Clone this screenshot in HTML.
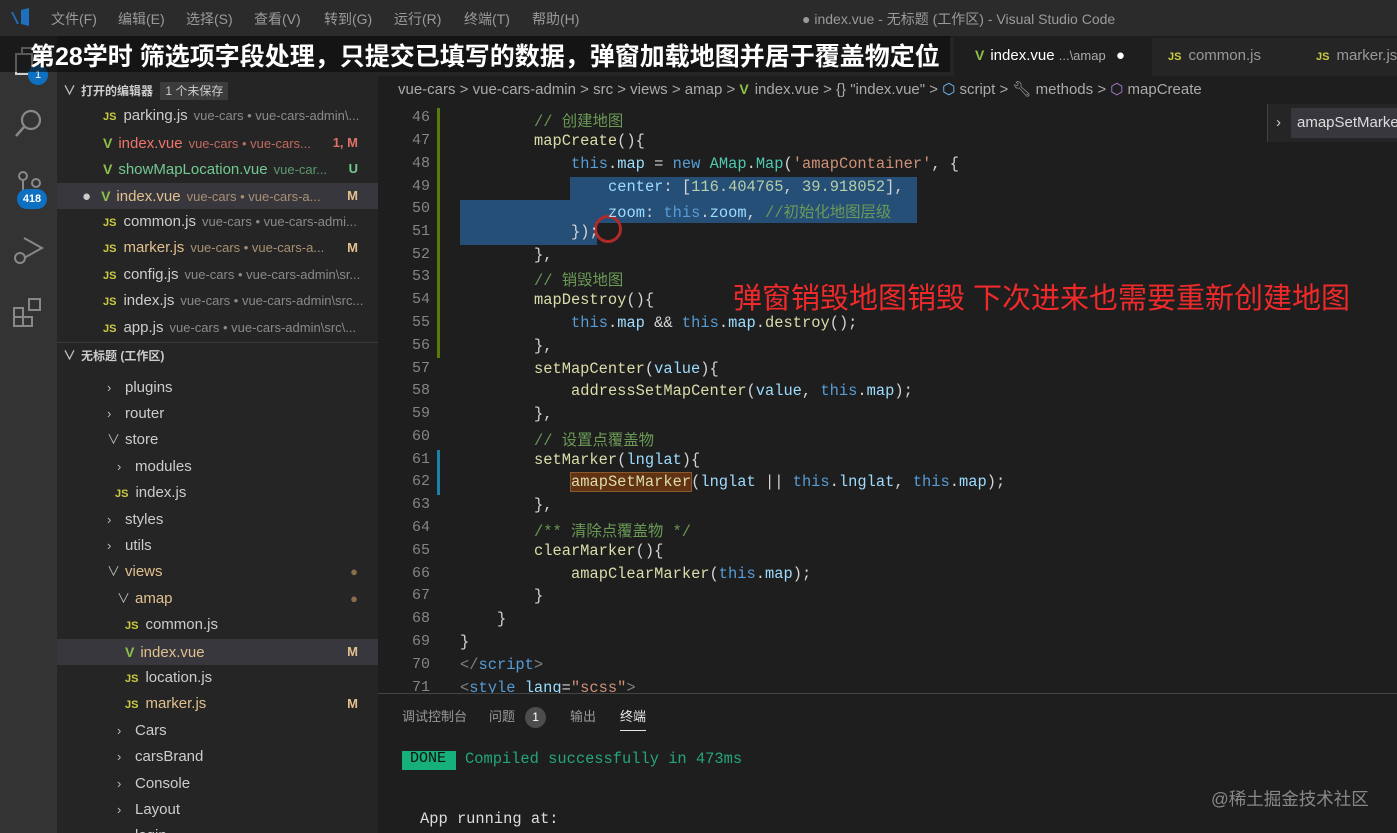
<!DOCTYPE html>
<html><head><meta charset="utf-8"><style>
*{margin:0;padding:0;box-sizing:border-box}
html{width:1397px;height:833px;overflow:hidden}
body{width:1397px;height:833px;overflow:hidden;background:#1e1e1e;font-family:"Liberation Sans","Noto Sans CJK SC",sans-serif;color:#ccc;position:relative}
.abs{position:absolute}
#title{left:0;top:0;width:1397px;height:36px;background:#2b2b2b}
#title span{position:absolute;top:9px;font-size:14px;color:#9a9a9a}
#act{left:0;top:36px;width:57px;height:797px;background:#333}
#side{left:57px;top:36px;width:321px;height:797px;background:#252526}
.row{position:absolute;left:57px;width:321px;height:26px;font-size:15px;line-height:26px;white-space:nowrap;overflow:hidden;color:#ccc}
.row .d{font-size:13px;color:#8a8a8a;margin-left:6px}
.js{color:#cbcb41;font-weight:bold;font-size:11px;margin-right:7px}
.vue{color:#8dc149;font-weight:bold;font-size:14px;margin-right:6px}
.st{position:absolute;right:20px;font-size:13px;font-weight:bold}
.chev{color:#bbb;display:inline-block;width:12px;margin-right:6px;font-size:13px}
.ln{position:absolute;left:378px;width:52px;text-align:right;font-family:"Liberation Mono",monospace;font-size:15px;color:#858585}
.cl{position:absolute;left:460px;font-family:"Liberation Mono","Noto Sans CJK SC",monospace;font-size:15.4px;white-space:pre;color:#d4d4d4}
.c{color:#6a9955}.k{color:#569cd6}.f{color:#dcdcaa}.s{color:#ce9178}.v{color:#9cdcfe}.n{color:#b5cea8}.t{color:#4ec9b0}
</style></head><body>
<div id="title" class="abs">
<svg class="abs" style="left:9px;top:8px" width="22" height="20"><path d="M2 4 L8 16 L10 16 L4 4Z M12 2 L20 0 L20 18 L12 16Z" fill="#1f6fbf"/></svg>
<span style="left:51px">文件(F)</span><span style="left:118px">编辑(E)</span><span style="left:186px">选择(S)</span><span style="left:254px">查看(V)</span><span style="left:324px">转到(G)</span><span style="left:394px">运行(R)</span><span style="left:464px">终端(T)</span><span style="left:532px">帮助(H)</span>
<span style="left:802px">● index.vue - 无标题 (工作区) - Visual Studio Code</span>
</div>
<div id="act" class="abs"></div>
<svg class="abs" style="left:14px;top:46px" width="30" height="30"><rect x="2" y="8" width="16" height="20" fill="none" stroke="#d0d0d0" stroke-width="2"/><path d="M8 8V2h10l6 6v14h-6" fill="none" stroke="#d0d0d0" stroke-width="2"/></svg>
<div class="abs" style="left:28px;top:65px;width:20px;height:20px;border-radius:50%;background:#0e70c0;color:#fff;font-size:11px;text-align:center;line-height:20px">1</div>
<svg class="abs" style="left:14px;top:108px" width="30" height="32"><circle cx="17" cy="12" r="9" fill="none" stroke="#888" stroke-width="2.2"/><path d="M10 19L2 28" stroke="#888" stroke-width="2.5"/></svg>
<svg class="abs" style="left:14px;top:170px" width="30" height="30"><circle cx="9" cy="6" r="4" fill="none" stroke="#888" stroke-width="2"/><circle cx="22" cy="13" r="4" fill="none" stroke="#888" stroke-width="2"/><path d="M9 10V26" stroke="#888" stroke-width="2"/></svg>
<div class="abs" style="left:17px;top:189px;width:30px;height:20px;border-radius:10px;background:#0e70c0;color:#fff;font-size:11px;font-weight:bold;text-align:center;line-height:20px">418</div>
<svg class="abs" style="left:12px;top:234px" width="32" height="34"><path d="M12 4 L30 14 L12 24" fill="none" stroke="#888" stroke-width="2"/><circle cx="8" cy="24" r="5" fill="none" stroke="#888" stroke-width="2"/></svg>
<svg class="abs" style="left:12px;top:296px" width="32" height="34"><rect x="2" y="12" width="9" height="9" fill="none" stroke="#888" stroke-width="2"/><rect x="11" y="21" width="9" height="9" fill="none" stroke="#888" stroke-width="2"/><rect x="2" y="21" width="9" height="9" fill="none" stroke="#888" stroke-width="2"/><rect x="17" y="3" width="11" height="11" fill="none" stroke="#888" stroke-width="2"/></svg>
<div id="side" class="abs"></div>
<div class="row" style="top:78px;font-size:12px;font-weight:bold;padding-left:6px"><span class="chev">∨</span>打开的编辑器 <span style="background:#3c3c3c;padding:2px 5px;font-weight:normal;margin-left:4px">1 个未保存</span></div>
<div class="row" style="top:103px;padding-left:46px"><span class="js">JS</span>parking.js<span class="d">vue-cars • vue-cars-admin\...</span></div>
<div class="row" style="top:130px;padding-left:46px;color:#f0746b"><span class="vue">V</span>index.vue<span class="d" style="color:#c06a60">vue-cars • vue-cars...</span><span class="st" style="color:#e0706a">1, M</span></div>
<div class="row" style="top:156px;padding-left:46px;color:#73c991"><span class="vue">V</span>showMapLocation.vue<span class="d" style="color:#5a9a70">vue-car...</span><span class="st">U</span></div>
<div class="row" style="top:183px;padding-left:25px;background:#37373d;color:#e2c08d"><span style="color:#ccc;margin-right:10px">●</span><span class="vue">V</span>index.vue<span class="d" style="color:#a89070">vue-cars • vue-cars-a...</span><span class="st">M</span></div>
<div class="row" style="top:209px;padding-left:46px"><span class="js">JS</span>common.js<span class="d">vue-cars • vue-cars-admi...</span></div>
<div class="row" style="top:235px;padding-left:46px;color:#e2c08d"><span class="js">JS</span>marker.js<span class="d" style="color:#a89070">vue-cars • vue-cars-a...</span><span class="st">M</span></div>
<div class="row" style="top:262px;padding-left:46px"><span class="js">JS</span>config.js<span class="d">vue-cars • vue-cars-admin\sr...</span></div>
<div class="row" style="top:288px;padding-left:46px"><span class="js">JS</span>index.js<span class="d">vue-cars • vue-cars-admin\src...</span></div>
<div class="row" style="top:315px;padding-left:46px"><span class="js">JS</span>app.js<span class="d">vue-cars • vue-cars-admin\src\...</span></div>
<div class="row" style="top:342px;font-size:12px;font-weight:bold;padding-left:6px;border-top:1px solid #3a3a3a"><span class="chev">∨</span>无标题 (工作区)</div>
<div class="row" style="top:375px;padding-left:50px"><span class="chev">›</span>plugins</div>
<div class="row" style="top:401px;padding-left:50px"><span class="chev">›</span>router</div>
<div class="row" style="top:427px;padding-left:50px"><span class="chev">∨</span>store</div>
<div class="row" style="top:454px;padding-left:60px"><span class="chev">›</span>modules</div>
<div class="row" style="top:480px;padding-left:58px"><span class="js">JS</span>index.js</div>
<div class="row" style="top:507px;padding-left:50px"><span class="chev">›</span>styles</div>
<div class="row" style="top:533px;padding-left:50px"><span class="chev">›</span>utils</div>
<div class="row" style="top:559px;padding-left:50px;color:#e2c08d"><span class="chev">∨</span>views<span class="st" style="color:#8a6d4a">●</span></div>
<div class="row" style="top:586px;padding-left:60px;color:#e2c08d"><span class="chev">∨</span>amap<span class="st" style="color:#8a6d4a">●</span></div>
<div class="row" style="top:612px;padding-left:68px"><span class="js">JS</span>common.js</div>
<div class="row" style="top:639px;padding-left:68px;background:#37373d;color:#e2c08d"><span class="vue">V</span>index.vue<span class="st">M</span></div>
<div class="row" style="top:665px;padding-left:68px"><span class="js">JS</span>location.js</div>
<div class="row" style="top:691px;padding-left:68px;color:#e2c08d"><span class="js">JS</span>marker.js<span class="st">M</span></div>
<div class="row" style="top:718px;padding-left:60px"><span class="chev">›</span>Cars</div>
<div class="row" style="top:744px;padding-left:60px"><span class="chev">›</span>carsBrand</div>
<div class="row" style="top:771px;padding-left:60px"><span class="chev">›</span>Console</div>
<div class="row" style="top:797px;padding-left:60px"><span class="chev">›</span>Layout</div>
<div class="row" style="top:823px;height:10px;padding-left:60px"><span class="chev">›</span>login</div>

<div class="abs" style="left:378px;top:38px;width:1019px;height:38px;background:#252526"></div>
<div class="abs" style="left:954px;top:38px;width:198px;height:38px;background:#1e1e1e"></div>
<div class="abs" style="left:975px;top:47px;font-size:15px;color:#fff"><span class="vue">V</span>index.vue <span style="font-size:13px;color:#aaa">...\amap</span> <span style="margin-left:6px">●</span></div>
<div class="abs" style="left:1168px;top:47px;font-size:15px;color:#999"><span class="js">JS</span>common.js</div>
<div class="abs" style="left:1316px;top:47px;font-size:15px;color:#999"><span class="js">JS</span>marker.js</div>
<div class="abs" style="left:0;top:36px;width:950px;height:36px;background:rgba(10,10,10,.6)"></div>
<div class="abs" style="left:30px;top:37px;font-size:25px;font-weight:bold;color:#fff;white-space:nowrap">第28学时 筛选项字段处理，只提交已填写的数据，弹窗加载地图并居于覆盖物定位</div>
<div class="abs" style="left:398px;top:80px;font-size:15px;color:#aaa;white-space:nowrap">vue-cars &gt; vue-cars-admin &gt; src &gt; views &gt; amap &gt; <span class="vue">V</span>index.vue &gt; {} "index.vue" &gt; <span style="color:#75beff">⬡</span> script &gt; <span>🔧︎</span> methods &gt; <span style="color:#b180d7">⬡</span> mapCreate</div>
<div class="abs" style="left:1267px;top:104px;width:130px;height:38px;background:#252526;border-left:1px solid #444"></div>
<div class="abs" style="left:1276px;top:114px;font-size:15px;color:#ccc">›</div>
<div class="abs" style="left:1291px;top:108px;width:106px;height:30px;background:#37373d;color:#ddd;font-size:15px;line-height:30px;padding-left:6px;white-space:nowrap;overflow:hidden">amapSetMarker</div>
<div class="abs" style="left:437px;top:108px;width:3px;height:250px;background:#587c0c"></div>
<div class="abs" style="left:437px;top:450px;width:3px;height:45px;background:#1b81a8"></div>
<div class="abs" style="left:570px;top:177px;width:347px;height:23px;background:#264f78"></div>
<div class="abs" style="left:460px;top:200px;width:457px;height:23px;background:#264f78"></div>
<div class="abs" style="left:460px;top:223px;width:137px;height:22px;background:#264f78"></div>
<div class="abs" style="left:594px;top:215px;width:28px;height:28px;border-radius:50%;border:3px solid #b02a2a"></div>
<div class="abs" style="left:733px;top:275px;font-size:29px;color:#f02a2a;white-space:nowrap">弹窗销毁地图销毁 下次进来也需要重新创建地图</div>

<div class="ln" style="top:109px">46</div><div class="cl" style="top:109px;left:534px"><span class="c">// 创建地图</span></div>
<div class="ln" style="top:132px">47</div><div class="cl" style="top:132px;left:534px"><span class="f">mapCreate</span>(){</div>
<div class="ln" style="top:155px">48</div><div class="cl" style="top:155px;left:571px"><span class="k">this</span>.<span class="v">map</span> = <span class="k">new</span> <span class="t">AMap</span>.<span class="t">Map</span>(<span class="s">'amapContainer'</span>, {</div>
<div class="ln" style="top:178px">49</div><div class="cl" style="top:178px;left:608px"><span class="v">center</span>: [<span class="n">116.404765</span>, <span class="n">39.918052</span>],</div>
<div class="ln" style="top:200px">50</div><div class="cl" style="top:200px;left:608px"><span class="v">zoom</span>: <span class="k">this</span>.<span class="v">zoom</span>, <span class="c">//初始化地图层级</span></div>
<div class="ln" style="top:223px">51</div><div class="cl" style="top:223px;left:571px">});</div>
<div class="ln" style="top:246px">52</div><div class="cl" style="top:246px;left:534px">},</div>
<div class="ln" style="top:268px">53</div><div class="cl" style="top:268px;left:534px"><span class="c">// 销毁地图</span></div>
<div class="ln" style="top:291px">54</div><div class="cl" style="top:291px;left:534px"><span class="f">mapDestroy</span>(){</div>
<div class="ln" style="top:314px">55</div><div class="cl" style="top:314px;left:571px"><span class="k">this</span>.<span class="v">map</span> &amp;&amp; <span class="k">this</span>.<span class="v">map</span>.<span class="f">destroy</span>();</div>
<div class="ln" style="top:337px">56</div><div class="cl" style="top:337px;left:534px">},</div>
<div class="ln" style="top:360px">57</div><div class="cl" style="top:360px;left:534px"><span class="f">setMapCenter</span>(<span class="v">value</span>){</div>
<div class="ln" style="top:382px">58</div><div class="cl" style="top:382px;left:571px"><span class="f">addressSetMapCenter</span>(<span class="v">value</span>, <span class="k">this</span>.<span class="v">map</span>);</div>
<div class="ln" style="top:405px">59</div><div class="cl" style="top:405px;left:534px">},</div>
<div class="ln" style="top:428px">60</div><div class="cl" style="top:428px;left:534px"><span class="c">// 设置点覆盖物</span></div>
<div class="ln" style="top:451px">61</div><div class="cl" style="top:451px;left:534px"><span class="f">setMarker</span>(<span class="v">lnglat</span>){</div>
<div class="ln" style="top:473px">62</div><div class="cl" style="top:473px;left:571px"><span class="f" style="background:#613214;outline:1px solid #8a5a2a">amapSetMarker</span>(<span class="v">lnglat</span> || <span class="k">this</span>.<span class="v">lnglat</span>, <span class="k">this</span>.<span class="v">map</span>);</div>
<div class="ln" style="top:496px">63</div><div class="cl" style="top:496px;left:534px">},</div>
<div class="ln" style="top:519px">64</div><div class="cl" style="top:519px;left:534px"><span class="c">/** 清除点覆盖物 */</span></div>
<div class="ln" style="top:542px">65</div><div class="cl" style="top:542px;left:534px"><span class="f">clearMarker</span>(){</div>
<div class="ln" style="top:565px">66</div><div class="cl" style="top:565px;left:571px"><span class="f">amapClearMarker</span>(<span class="k">this</span>.<span class="v">map</span>);</div>
<div class="ln" style="top:587px">67</div><div class="cl" style="top:587px;left:534px">}</div>
<div class="ln" style="top:610px">68</div><div class="cl" style="top:610px;left:497px">}</div>
<div class="ln" style="top:633px">69</div><div class="cl" style="top:633px;left:460px">}</div>
<div class="ln" style="top:656px">70</div><div class="cl" style="top:656px;left:460px"><span style="color:#808080">&lt;/</span><span class="k">script</span><span style="color:#808080">&gt;</span></div>
<div class="ln" style="top:679px">71</div><div class="cl" style="top:679px;left:460px"><span style="color:#808080">&lt;</span><span class="k">style</span> <span class="v">lang</span>=<span class="s">"scss"</span><span style="color:#808080">&gt;</span></div>
<div class="abs" style="left:378px;top:693px;width:1019px;height:140px;background:#1e1e1e;border-top:1px solid #444"></div>
<div class="abs" style="left:402px;top:706px;font-size:13px;color:#999;white-space:nowrap">调试控制台<span style="margin-left:22px">问题</span><span style="display:inline-block;width:21px;height:21px;border-radius:50%;background:#4d4d4d;color:#fff;text-align:center;line-height:21px;margin-left:10px;font-size:12px">1</span><span style="margin-left:24px">输出</span><span style="margin-left:24px;color:#e7e7e7;border-bottom:1px solid #e7e7e7;padding-bottom:6px">终端</span></div>
<div class="abs" style="left:402px;top:751px;width:54px;height:19px;background:#16b07a"></div>
<div class="abs" style="left:410px;top:750px;font-family:'Liberation Mono',monospace;font-size:15px;color:#111">DONE</div>
<div class="abs" style="left:465px;top:750px;font-family:'Liberation Mono',monospace;font-size:15.4px;color:#23a67a">Compiled successfully in 473ms</div>
<div class="abs" style="left:420px;top:810px;font-family:'Liberation Mono',monospace;font-size:15.4px;color:#ddd">App running at:</div>
<div class="abs" style="left:1211px;top:786px;font-size:17.5px;color:#888">@稀土掘金技术社区</div>
</body></html>
